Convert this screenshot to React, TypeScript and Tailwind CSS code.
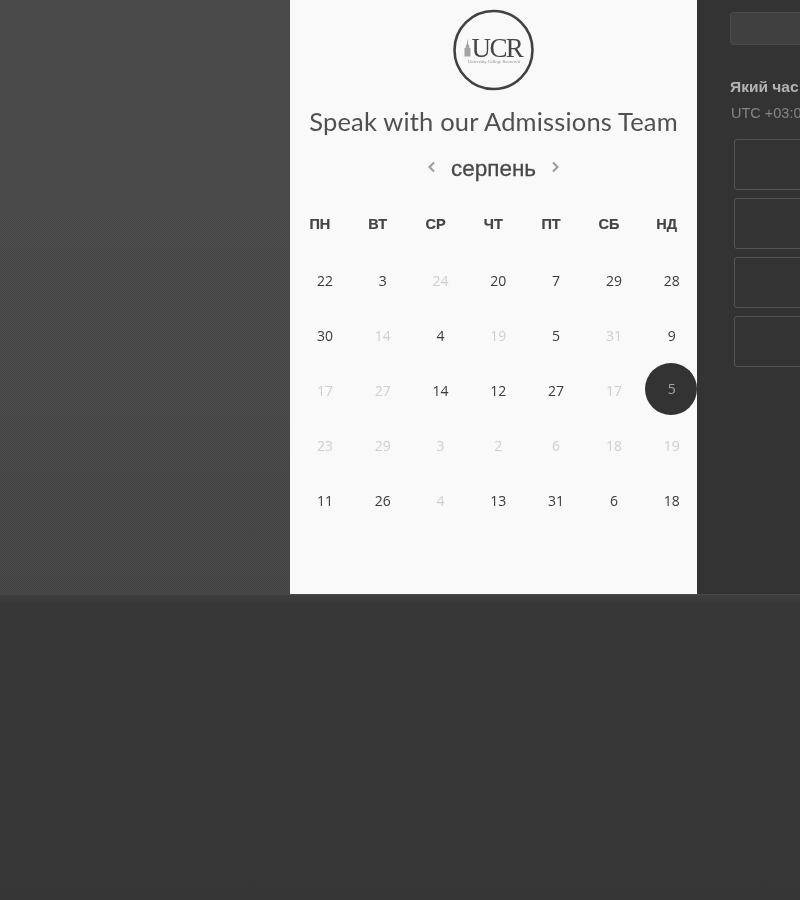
import React from 'react';

const dayNames = ['ПН', 'ВТ', 'СР', 'ЧТ', 'ПТ', 'СБ', 'НД'];

// muted = day outside the current month
const rows: { n: number; muted?: boolean; selected?: boolean }[][] = [
  [{ n: 22 }, { n: 3 }, { n: 24, muted: true }, { n: 20 }, { n: 7 }, { n: 29 }, { n: 28 }],
  [{ n: 30 }, { n: 14, muted: true }, { n: 4 }, { n: 19, muted: true }, { n: 5 }, { n: 31, muted: true }, { n: 9 }],
  [{ n: 17, muted: true }, { n: 27, muted: true }, { n: 14 }, { n: 12 }, { n: 27 }, { n: 17, muted: true }, { n: 5, selected: true }],
  [{ n: 23, muted: true }, { n: 29, muted: true }, { n: 3, muted: true }, { n: 2, muted: true }, { n: 6, muted: true }, { n: 18, muted: true }, { n: 19, muted: true }],
  [{ n: 11 }, { n: 26 }, { n: 4, muted: true }, { n: 13 }, { n: 31 }, { n: 6 }, { n: 18 }],
];

const Logo = () => (
  <svg width="82" height="82" viewBox="0 0 82 82" className="blur-[0.5px]">
    <circle cx="40.5" cy="41" r="39" fill="none" stroke="#414141" strokeWidth="2.6" />
    <path d="M11.5 47.5V39h1.2v-2.5l1-1 .8-6 .8 6 1 1V39h1.2v8.5z" fill="#a3a3a3" />
    <text x="18.5" y="47.5" fontFamily="'Liberation Serif', serif" fontSize="27" letterSpacing="-1.6" fill="#454545">UCR</text>
    <text x="41" y="53.5" textAnchor="middle" fontFamily="'Liberation Serif', serif" fontSize="4.4" fill="#8a8a8a">University College Roosevelt</text>
  </svg>
);

export default function App() {
  return (
    <div className="w-[800px] h-[900px] overflow-hidden bg-[#363636]">
      <div className="flex h-[594px]">
        <div className="w-[290px] shrink-0 bg-[repeating-conic-gradient(#ffffff09_0_25%,transparent_0_50%),linear-gradient(to_bottom,#474747,#454545_70%,#424242)] bg-[length:2px_2px,100%_100%]" />

        <div className="w-[407px] shrink-0 bg-[#f9f9f9] flex flex-col items-center pt-[9px] font-['Open_Sans',sans-serif]">
          <Logo />
          <h1 className="mt-[13px] font-['Lato',sans-serif] tracking-[0.18px] text-[25.5px] leading-[34px] text-[#505050] whitespace-nowrap blur-[0.4px]">
            Speak with our Admissions Team
          </h1>
          <div className="mt-[15px] flex items-center h-[30px] text-[#9a9a9a]">
            <svg width="9" height="12" viewBox="0 0 9 12" fill="none" stroke="currentColor" strokeWidth="2" className="mb-[3px]">
              <path d="M7 1.5 2.5 6 7 10.5" />
            </svg>
            <span className="mx-[15px] mt-[1px] font-['Liberation_Sans',sans-serif] text-[22.5px] text-[#484848] [-webkit-text-stroke:0.3px_#484848] blur-[0.4px]">
              серпень
            </span>
            <svg width="9" height="12" viewBox="0 0 9 12" fill="none" stroke="currentColor" strokeWidth="2" className="mb-[3px]">
              <path d="M2 1.5 6.5 6 2 10.5" />
            </svg>
          </div>
          <div className="mt-[31px] w-full pl-[1px] grid grid-cols-[repeat(7,57.8px)] font-['Liberation_Sans',sans-serif] text-[14.5px] font-bold text-[#444444] [-webkit-text-stroke:0.2px_#444444] blur-[0.4px]">
            {dayNames.map(d => (
              <div key={d} className="text-center leading-[20px]">{d}</div>
            ))}
          </div>
          <div className="mt-[19px] w-full pl-[6px] grid grid-cols-[repeat(7,57.8px)] auto-rows-[55px] text-[14px]">
            {rows.flat().map((day, i) => (
              <div key={i} className="relative flex items-center justify-center">
                {day.selected && (
                  <div className="absolute left-[2.5px] top-0 w-[52px] h-[52px] rounded-full bg-[#333333]" />
                )}
                <span
                  className={`relative blur-[0.3px] ${
                    day.selected
                      ? 'text-[#a3a3a3] -mt-[4px]'
                      : day.muted
                      ? 'text-[#cfcfcf]'
                      : 'text-[#3a3a3a]'
                  }`}
                >
                  {day.n}
                </span>
              </div>
            ))}
          </div>
        </div>

        <div className="flex-1 min-w-0 overflow-hidden bg-[#333333] pt-[12px] pl-[33px]">
          <div className="w-[400px] h-[33px] rounded-[3px] bg-[#404040] border border-[#4a4a4a]" />
          <div className="mt-[31px] w-[400px] text-[15.5px] leading-[22px] font-bold text-[#b3b3b3] font-['Liberation_Sans',sans-serif] whitespace-nowrap blur-[0.3px]">
            Який час вас влаштовує?
          </div>
          <div className="mt-[4px] pl-[1px] w-[400px] text-[14.5px] leading-[22px] text-[#858585] font-['Liberation_Sans',sans-serif] whitespace-nowrap blur-[0.3px]">
            UTC +03:00
          </div>
          <div className="mt-[15px] ml-[4px] w-[400px] flex flex-col gap-[8px]">
            {[0, 1, 2, 3].map(i => (
              <div key={i} className="h-[51px] rounded-[3px] border border-[#555555]" />
            ))}
          </div>
        </div>
      </div>
      <div className="h-[306px] bg-gradient-to-b from-[#3e3e3e] via-[#373737] via-[3%] to-[#363636] border-t border-[#484848]" />
    </div>
  );
}
